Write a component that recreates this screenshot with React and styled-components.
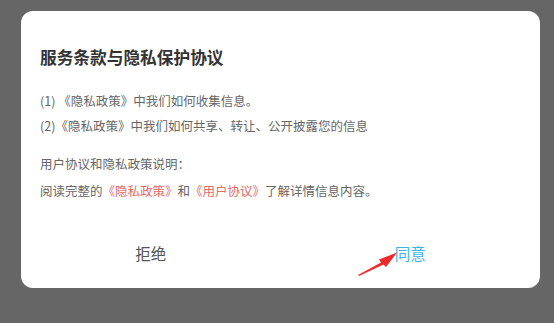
import React from "react";
import styled, { createGlobalStyle } from "styled-components";

const GlobalStyle = createGlobalStyle`
  html, body {
    margin: 0;
    padding: 0;
    background: #666666;
  }
  body {
    font-family: "Noto Sans CJK SC", "Noto Sans", sans-serif;
  }
`;

const Backdrop = styled.div`
  width: 554px;
  height: 323px;
  padding: 11px 14px 35px 21px;
  box-sizing: border-box;
  display: flex;
`;

const Dialog = styled.div`
  position: relative;
  flex: 1;
  background: #fff;
  border-radius: 12px;
  display: flex;
  flex-direction: column;
  padding: 33px 19px 0 19px;
`;

const Title = styled.h2`
  margin: 0 0 18px;
  font-size: 16.7px;
  line-height: 26px;
  font-weight: 700;
  color: #333;
`;

const Line = styled.p`
  margin: ${(p) => p.$top || 0}px 0 ${(p) => p.$gap || 0}px;
  font-size: 12.5px;
  line-height: 25px;
  color: #666;
  white-space: nowrap;
`;

const Link = styled.span`
  color: #e46a6a;
`;

const Actions = styled.div`
  margin: auto -19px 0;
  height: 68px;
  display: grid;
  grid-template-columns: 1fr 1fr;
  align-items: start;
`;

const Action = styled.button`
  justify-self: center;
  border: none;
  background: none;
  padding: 0;
  margin-top: 22px;
  font-family: inherit;
  font-size: 15.5px;
  line-height: 22px;
  color: ${(p) => (p.$primary ? "#3ab4ec" : "#555")};
`;

const Pointer = styled.svg`
  position: absolute;
  left: 336px;
  top: 238px;
`;

export default function App() {
  return (
    <>
      <GlobalStyle />
      <Backdrop>
        <Dialog>
          <Title>服务条款与隐私保护协议</Title>
          <Line>(1) 《隐私政策》中我们如何收集信息。</Line>
          <Line $gap={13}>(2)《隐私政策》中我们如何共享、转让、公开披露您的信息</Line>
          <Line>用户协议和隐私政策说明：</Line>
          <Line $top={2}>
            阅读完整的<Link>《隐私政策》</Link>和<Link>《用户协议》</Link>了解详情信息内容。
          </Line>
          <Actions>
            <Action>拒绝</Action>
            <Action $primary>同意</Action>
          </Actions>
          <Pointer width="46" height="30" viewBox="0 0 46 30">
            <polygon
              points="1,26 24,13.5 22,10.5 40,3.5 29,18 26.5,15.5 2,27"
              fill="#f02a2a"
            />
          </Pointer>
        </Dialog>
      </Backdrop>
    </>
  );
}
